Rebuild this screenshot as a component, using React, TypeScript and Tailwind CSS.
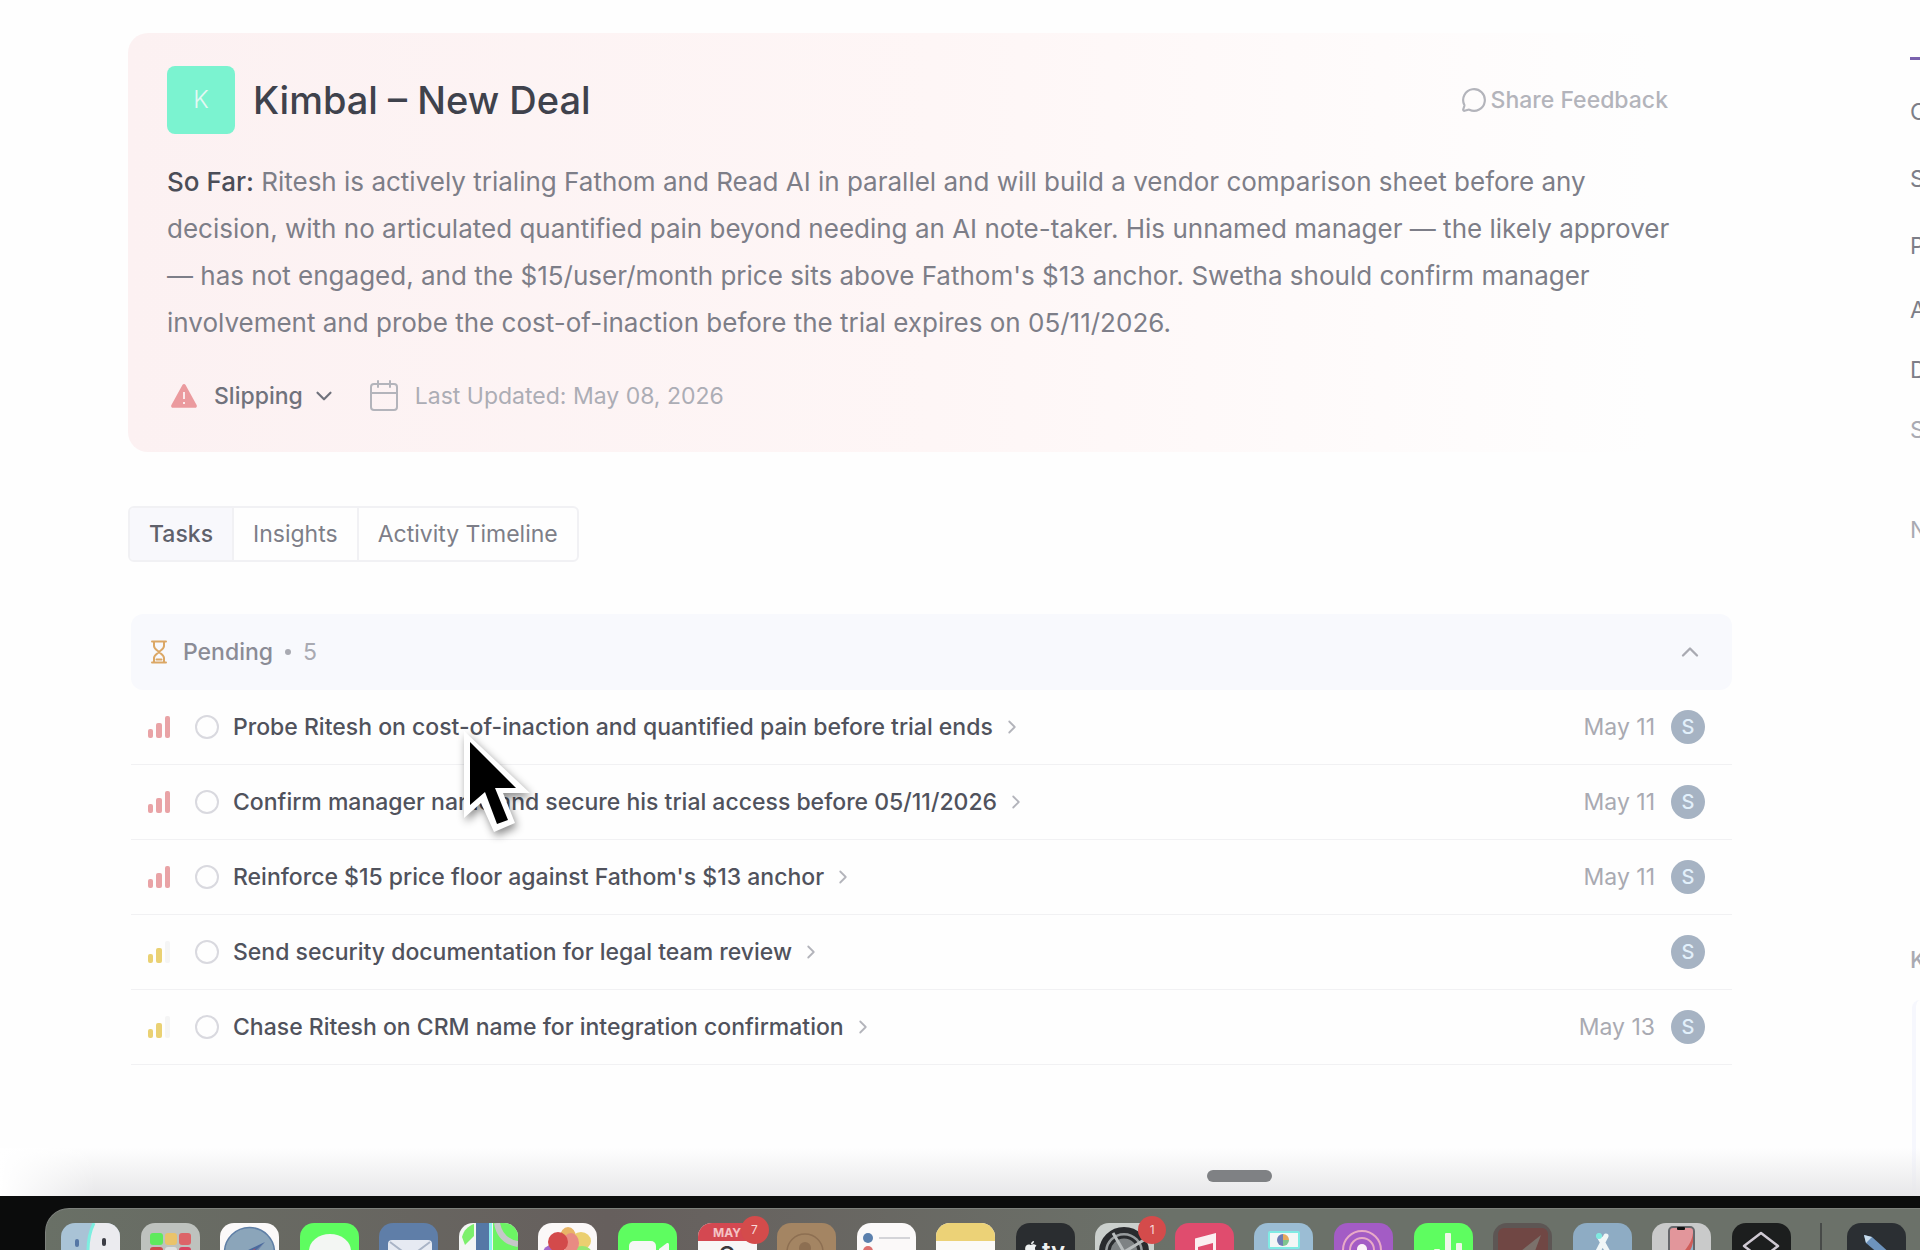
import { type ReactNode, useState } from "react";
import { ChevronDown, ChevronRight, ChevronUp, MessageCircle } from "lucide-react";
import { FaApple } from "react-icons/fa";

type Priority = "high" | "medium";

interface Task {
  id: number;
  title: string;
  priority: Priority;
  due?: string;
  owner: string;
}

const TASKS: Task[] = [
  {
    id: 1,
    title: "Probe Ritesh on cost-of-inaction and quantified pain before trial ends",
    priority: "high",
    due: "May 11",
    owner: "S",
  },
  {
    id: 2,
    title: "Confirm manager name and secure his trial access before 05/11/2026",
    priority: "high",
    due: "May 11",
    owner: "S",
  },
  {
    id: 3,
    title: "Reinforce $15 price floor against Fathom's $13 anchor",
    priority: "high",
    due: "May 11",
    owner: "S",
  },
  {
    id: 4,
    title: "Send security documentation for legal team review",
    priority: "medium",
    owner: "S",
  },
  {
    id: 5,
    title: "Chase Ritesh on CRM name for integration confirmation",
    priority: "medium",
    due: "May 13",
    owner: "S",
  },
];

const TABS = ["Tasks", "Insights", "Activity Timeline"];

function WarningIcon() {
  return (
    <svg width="28" height="26" viewBox="0 0 28 26" aria-hidden="true">
      <path
        d="M12.4 1.9a1.9 1.9 0 0 1 3.2 0l11 20.2a1.8 1.8 0 0 1-1.6 2.7H3a1.8 1.8 0 0 1-1.6-2.7z"
        fill="#eb9a9e"
      />
      <path d="M14 9v7M14 19v2" stroke="#fbeaeb" strokeWidth="2" />
    </svg>
  );
}

function CalendarIcon() {
  return (
    <svg
      width="30"
      height="32"
      viewBox="0 0 30 32"
      fill="none"
      stroke="#b3b4bb"
      strokeWidth="2"
      strokeLinecap="round"
      aria-hidden="true"
    >
      <rect x="2" y="4" width="26" height="26" rx="3" />
      <path d="M2 13h26M9 1v6M21 1v6" />
    </svg>
  );
}

function HourglassIcon() {
  return (
    <svg
      width="16"
      height="24"
      viewBox="0 0 16 24"
      fill="none"
      stroke="#dba765"
      strokeWidth="2"
      strokeLinecap="round"
      strokeLinejoin="round"
      aria-hidden="true"
    >
      <path d="M1 1.5h14M1 22.5h14M3 2v4c0 3 4 4.500 5 6 1-1.500 5-3 5-6V2M3 22v-4c0-3 4-4.500 5-6 1 1.500 5 3 5 6v4" />
      <path d="M5.500 19.500h5" />
    </svg>
  );
}

function PriorityIcon({ level }: { level: Priority }) {
  const color = level === "high" ? "#e9a3a6" : "#ead173";
  return (
    <svg width="24" height="24" viewBox="0 0 24 24" aria-hidden="true">
      <rect x="1" y="14" width="5" height="9" rx="2" fill={color} />
      <rect x="9" y="8" width="6" height="15" rx="2" fill={color} />
      <rect
        x="18"
        y="1"
        width="5"
        height="22"
        rx="2"
        fill={level === "high" ? color : "#f5f5f5"}
      />
    </svg>
  );
}

function TaskRow({ task }: { task: Task }) {
  return (
    <li className="flex h-[75px] items-center border-b border-[#f1f1f3] pl-4 pr-[27px]">
      <PriorityIcon level={task.priority} />
      <input
        id={`task-${task.id}`}
        type="checkbox"
        className="ml-6 size-6 appearance-none rounded-full border-2 border-[#d9d9df] checked:bg-[#d9d9df]"
      />
      <label
        htmlFor={`task-${task.id}`}
        className="ml-[14px] text-[23px] font-medium text-[#50525c]"
      >
        {task.title}
      </label>
      <ChevronRight size={22} strokeWidth={2} className="ml-2 text-[#b3b4bb]" />
      <div className="ml-auto flex items-center gap-4">
        {task.due && <span className="text-[23px] text-[#a9aab2]">{task.due}</span>}
        <span className="flex size-[34px] items-center justify-center rounded-full bg-[#a6b3c3] text-xl font-medium text-[#e2f0fb]">
          {task.owner}
        </span>
      </div>
    </li>
  );
}

function DealCard() {
  return (
    <section className="rounded-[20px] bg-linear-to-r from-[#fcf1f2] via-[#fef6f6] via-50% to-[#fefefe] to-95% pb-[42px] pl-[39px] pr-[52px] pt-[33px]">
      <header className="flex items-center">
        <span className="flex size-[68px] items-center justify-center rounded-lg bg-[#7bf3d0] text-2xl font-light text-[#e4f8f4]">
          K
        </span>
        <h1 className="ml-[18px] text-[38px] font-medium leading-[68px] text-[#3f424c]">
          Kimbal – New Deal
        </h1>
        <button className="ml-auto flex items-center gap-1 px-3 text-[23px] font-medium text-[#b3b4bb]">
          <MessageCircle size={26} strokeWidth={2} />
          Share Feedback
        </button>
      </header>

      <p className="mt-6 text-[26px] leading-[47px] text-[#7d7e88]">
        <strong className="font-medium text-[#4b4d57]">So Far:</strong> Ritesh is
        actively trialing Fathom and Read AI in parallel and will build a vendor
        comparison sheet before any decision, with no articulated quantified pain
        beyond needing an AI note-taker. His unnamed manager — the likely approver
        — has not engaged, and the $15/user/month price sits above Fathom's $13
        anchor. Swetha should confirm manager involvement and probe the
        cost-of-inaction before the trial expires on 05/11/2026.
      </p>

      <div className="mt-9 flex h-7 items-center text-[23px]">
        <button className="ml-[3px] flex items-center font-medium text-[#70727c]">
          <WarningIcon />
          <span className="ml-4">Slipping</span>
          <ChevronDown size={26} strokeWidth={2} className="ml-2" />
        </button>
        <div className="ml-8 flex items-center gap-4 text-[#acadb5]">
          <CalendarIcon />
          <span>Last Updated: May 08, 2026</span>
        </div>
      </div>
    </section>
  );
}

/* ---------- Dock ---------- */

interface DockApp {
  name: string;
  bg: string;
  art: ReactNode;
  badge?: string;
}

const DOCK_APPS: DockApp[] = [
  {
    name: "Finder",
    bg: "bg-[#a9c3d6]",
    art: (
      <>
        <path d="M33 0h26v59H27V28c0-12 2-22 6-28z" fill="#ebebef" />
        <path d="M33 0c-4 8-6 18-6 28" fill="none" stroke="#7deee0" strokeWidth="3" />
        <rect x="14" y="16" width="4" height="8" rx="2" fill="#5577a5" />
        <rect x="41" y="15" width="4" height="8" rx="2" fill="#3c3d45" />
      </>
    ),
  },
  {
    name: "Launchpad",
    bg: "bg-[#bec2be]",
    art: (
      <>
        <rect x="9" y="10" width="13" height="12" rx="3" fill="#5eea5c" />
        <rect x="24" y="10" width="12" height="12" rx="3" fill="#eac36a" />
        <rect x="38" y="10" width="12" height="12" rx="3" fill="#dc6468" />
        <rect x="9" y="24" width="13" height="12" rx="3" fill="#cc4b4d" />
        <rect x="24" y="24" width="12" height="12" rx="3" fill="#dfe0e0" />
        <rect x="38" y="24" width="12" height="12" rx="3" fill="#d84562" />
      </>
    ),
  },
  {
    name: "Safari",
    bg: "bg-[#fbf9f9]",
    art: (
      <>
        <circle cx="29.500" cy="29.500" r="25" fill="#8ba5ba" stroke="#5f7fa6" strokeWidth="1.500" />
        <path d="m45 19-13 12-6-3z" fill="#4a6a9e" />
        <path d="m45 19-13 13-7 10z" fill="#56649a" />
        <path d="m36 25-10 6-3 8z" fill="#cf4a5c" />
      </>
    ),
  },
  {
    name: "Messages",
    bg: "bg-[#5efd60]",
    art: <ellipse cx="30" cy="28" rx="21" ry="17" fill="#f3f6f3" />,
  },
  {
    name: "Mail",
    bg: "bg-[#5f7ea8]",
    art: (
      <>
        <rect x="9" y="17" width="44" height="30" rx="4" fill="#e6eaf2" />
        <path d="m11 19 20 15 20-15" fill="none" stroke="#a9b4c6" strokeWidth="2" />
      </>
    ),
  },
  {
    name: "Maps",
    bg: "bg-[#f3f5f4]",
    art: (
      <>
        <path d="M3 14C5 7 9 3 15 1v12L6 22z" fill="#7cf06c" />
        <path d="M17 0h13v59H17z" fill="#5578a6" />
        <path d="M30 0h3v59h-3z" fill="#8df2f0" />
        <path d="M34 0h25v59H47L34 30z" fill="#6cf464" />
        <path d="M38 0c2 12 9 19 21 21" fill="none" stroke="#c5c8c8" strokeWidth="6" />
      </>
    ),
  },
  {
    name: "Photos",
    bg: "bg-[#fbf8f8]",
    art: (
      <>
        <ellipse cx="30" cy="14" rx="8" ry="10" fill="#e8b467" />
        <ellipse cx="43" cy="18" rx="10" ry="9" fill="#ebcf70" />
        <ellipse cx="44" cy="31" rx="10" ry="8" fill="#97e673" />
        <ellipse cx="14" cy="30" rx="9" ry="8" fill="#a469cb" />
        <ellipse cx="33" cy="20" rx="8" ry="10" fill="#e88b83" />
        <ellipse cx="20" cy="19" rx="10" ry="10" fill="#d34a4b" />
      </>
    ),
  },
  {
    name: "FaceTime",
    bg: "bg-[#5efd60]",
    art: (
      <>
        <rect x="11" y="18" width="27" height="24" rx="5" fill="#f5f7f5" />
        <path d="m41 26 8-6c1 0 2 0 2 2v16l-10-6z" fill="#f5f7f5" />
      </>
    ),
  },
  {
    name: "Calendar",
    bg: "bg-[#f8f6f6]",
    badge: "7",
    art: (
      <>
        <rect width="59" height="18" fill="#d44851" />
        <text x="29" y="14" fontSize="12" fontWeight="700" textAnchor="middle" fill="#f4c3c5">
          MAY
        </text>
        <text x="29" y="45" fontSize="30" textAnchor="middle" fill="#3a3a3d">
          8
        </text>
      </>
    ),
  },
  {
    name: "Contacts",
    bg: "bg-[#a48563]",
    art: (
      <>
        <circle cx="28" cy="29" r="18" fill="none" stroke="#8d6f52" strokeWidth="1.500" />
        <circle cx="28" cy="25" r="6" fill="#8d6f52" />
      </>
    ),
  },
  {
    name: "Reminders",
    bg: "bg-[#fbf9f9]",
    art: (
      <>
        <circle cx="11" cy="15" r="5" fill="#5b80ad" />
        <circle cx="11" cy="28" r="5" fill="#dc7170" />
        <path d="M22 15h31M22 28h31" stroke="#d4d4d8" strokeWidth="2" />
      </>
    ),
  },
  {
    name: "Notes",
    bg: "bg-[#fbfaf7]",
    art: <rect width="59" height="18" fill="#ecd277" />,
  },
  {
    name: "TV",
    bg: "bg-[#2a2d30]",
    art: (
      <>
        <FaApple x="7" y="17" width="18" height="22" color="#eef1f1" />
        <text x="26" y="36" fontSize="24" fontWeight="600" fill="#eef1f1">
          tv
        </text>
      </>
    ),
  },
  {
    name: "Settings",
    bg: "bg-[#cbd0cd]",
    badge: "1",
    art: (
      <>
        <circle cx="29" cy="29" r="22" fill="#989c9e" stroke="#292b2e" strokeWidth="6" />
        <circle cx="29" cy="29" r="15" fill="#7e8284" stroke="#292b2e" strokeWidth="3" />
        <path d="M29 29 18 10M29 29l20-12M29 29H8" stroke="#b9bdbe" strokeWidth="3" />
      </>
    ),
  },
  {
    name: "Music",
    bg: "bg-[#e04c6e]",
    art: (
      <path
        d="M20 15.500 41 10v31a6 5 0 1 1-3-4V20l-15 4v20a6 5 0 1 1-3-4z"
        fill="#fbeef1"
      />
    ),
  },
  {
    name: "Keynote",
    bg: "bg-[#9bbdd4]",
    art: (
      <>
        <rect x="15" y="9" width="30" height="16" rx="1" fill="#f3f6f6" stroke="#80ebe4" strokeWidth="2" />
        <path d="M29 11a6 6 0 0 1 6 6h-6z" fill="#e6a95d" />
        <path d="M35 17a6 6 0 0 1-6 6v-6z" fill="#7fc58f" />
        <path d="M29 23a6 6 0 0 1 0-12z" fill="#6e7db4" />
        <path d="M28 28h4v31h-4z" fill="#6d8da6" />
      </>
    ),
  },
  {
    name: "Podcasts",
    bg: "bg-[#a35cc5]",
    art: (
      <>
        <circle cx="28" cy="27" r="19" fill="none" stroke="#e8aac7" strokeWidth="2" />
        <circle cx="28" cy="27" r="12" fill="none" stroke="#e8aac7" strokeWidth="2" />
        <circle cx="28" cy="26" r="5" fill="#fbf2f8" />
      </>
    ),
  },
  {
    name: "Numbers",
    bg: "bg-[#5efd60]",
    art: (
      <>
        <rect x="20" y="26" width="6" height="20" rx="1" fill="#eff6e8" />
        <rect x="31" y="10" width="6" height="34" rx="1" fill="#eff6e8" />
        <rect x="42" y="20" width="6" height="24" rx="1" fill="#eff6e8" />
      </>
    ),
  },
  {
    name: "Dictionary",
    bg: "bg-[#5d5654]",
    art: (
      <>
        <rect x="5" y="5" width="50" height="54" rx="6" fill="#704744" />
        <path d="m28 28 20-16-6 16z" fill="#7b716b" />
      </>
    ),
  },
  {
    name: "App Store",
    bg: "bg-[#8eacc4]",
    art: (
      <>
        <path d="m33 13-14 27M26 13l15 27" stroke="#f0f6f7" strokeWidth="5" strokeLinecap="round" />
        <circle cx="26" cy="13" r="3" fill="#7ee9e0" />
      </>
    ),
  },
  {
    name: "iPhone Mirroring",
    bg: "bg-[#c9caca]",
    art: (
      <>
        <rect x="17" y="4" width="25" height="60" rx="4" fill="#e2969b" stroke="#66686c" strokeWidth="2" />
        <path d="M41 10v30H29c-2-12 10-14 12-30z" fill="#cf5d59" />
        <path d="M41 19v26H31c0-12 8-14 10-26z" fill="#8fb2c9" />
        <rect x="25" y="4" width="8" height="3" rx="1" fill="#111" />
      </>
    ),
  },
  {
    name: "Shortcuts",
    bg: "bg-[#1c1e1e]",
    art: (
      <path
        d="m29 10 17 13-17 13-17-13z"
        fill="none"
        stroke="#cfc9d3"
        strokeWidth="2.500"
        strokeLinejoin="round"
      />
    ),
  },
];

function DockIcon({ app }: { app: DockApp }) {
  return (
    <button aria-label={app.name} className="relative size-[59px] shrink-0">
      <span className={`block size-full overflow-hidden rounded-[14px] ${app.bg}`}>
        <svg viewBox="0 0 59 59" className="size-full">
          {app.art}
        </svg>
      </span>
      {app.badge && (
        <span className="absolute -right-3 -top-[7px] flex size-7 items-center justify-center rounded-full bg-[#d44b4b] text-xs text-[#f7dada]">
          {app.badge}
        </span>
      )}
    </button>
  );
}

function Dock() {
  return (
    <footer className="h-[54px] overflow-hidden bg-[#0b0c0c] pl-[45px] pt-3">
      <nav
        aria-label="Dock"
        className="flex items-start rounded-tl-3xl border-l border-t border-[#7d817c] bg-linear-to-r from-[#697066] via-[#665f5d] via-30% to-[#6b7169] to-60% pl-[15px] pr-[14px] pt-[14px]"
      >
        <div className="flex flex-1 justify-between">
          {DOCK_APPS.map((app) => (
            <DockIcon key={app.name} app={app} />
          ))}
        </div>
        <span className="ml-[29px] h-14 w-[2px] bg-[#474a48]" />
        <button
          aria-label="Preview"
          className="ml-[25px] size-[59px] overflow-hidden rounded-[14px] bg-[#2b2f33]"
        >
          <svg viewBox="0 0 59 59" className="size-full">
            <path d="m17 12 8 2 20 18-6 5-20-17z" fill="#6d93bd" />
            <path d="m17 12 8 2-6 6z" fill="#c8dcec" />
          </svg>
        </button>
      </nav>
    </footer>
  );
}

function Cursor() {
  return (
    <svg
      width="76"
      height="112"
      viewBox="0 0 76 112"
      className="pointer-events-none absolute left-[460px] top-[728px] drop-shadow-[2px_4px_4px_rgba(0,0,0,0.45)]"
      aria-hidden="true"
    >
      <path d="M4 3v87l17-15 13 29 21-9-12-30h27z" fill="#fff" />
      <path d="M10 14v63l15-13 12 32 11-4-13-32h21z" fill="#000" />
    </svg>
  );
}

export default function App() {
  const [activeTab, setActiveTab] = useState("Tasks");
  const [open, setOpen] = useState(true);

  return (
    <div className="relative flex h-screen flex-col overflow-hidden bg-[#fefefe] font-['Inter',sans-serif]">
      <div className="relative flex flex-1">
        <main className="min-w-0 flex-1 pl-32 pr-[178px] pt-[33px]">
          <DealCard />

          <div
            role="tablist"
            className="mt-[54px] inline-flex h-14 divide-x-2 divide-[#f1f1f4] overflow-hidden rounded-md border-2 border-[#f1f1f4] text-[23px]"
          >
            {TABS.map((tab) => (
              <button
                key={tab}
                role="tab"
                aria-selected={tab === activeTab}
                onClick={() => setActiveTab(tab)}
                className={
                  tab === activeTab
                    ? "bg-[#f8f8fc] px-[19px] font-medium text-[#5f616b]"
                    : "px-[19px] text-[#7d7e88]"
                }
              >
                {tab}
              </button>
            ))}
          </div>

          <section className="ml-[3px] mt-[52px]">
            <button
              onClick={() => setOpen(!open)}
              aria-expanded={open}
              className="flex h-[76px] w-full items-center rounded-xl bg-[#f8f9fd] pl-5 pr-7 text-[23px] text-[#a9aab2]"
            >
              <HourglassIcon />
              <span className="ml-4 font-medium text-[#8b8c96]">Pending</span>
              <span className="ml-3 size-[6px] rounded-full bg-[#a9aab2]" />
              <span className="ml-3">5</span>
              <ChevronUp size={28} strokeWidth={2} className="ml-auto" />
            </button>
            {open && (
              <ul>
                {TASKS.map((task) => (
                  <TaskRow key={task.id} task={task} />
                ))}
              </ul>
            )}
          </section>
        </main>

        {/* details panel, mostly past the right edge of the window */}
        <aside className="flex w-[10px] shrink-0 flex-col overflow-hidden pt-[57px] text-[23px] leading-8 text-[#7d7e88]">
          <div className="h-[3px] shrink-0 bg-[#7a62ad]" />
          <span className="mt-9">C</span>
          <span className="mt-[35px]">S</span>
          <span className="mt-[35px]">P</span>
          <span className="mt-8">A</span>
          <span className="mt-7">D</span>
          <span className="mt-7 text-[#a9aab2]">S</span>
          <span className="mt-[68px] text-[#a9aab2]">N</span>
          <span className="mt-[398px] font-medium text-[#a9aab2]">K</span>
          <div className="ml-[2px] mt-6 w-4 flex-1 rounded-tl-lg border-l-4 border-[#f6f7fd]" />
        </aside>

        <div className="pointer-events-none absolute inset-x-0 bottom-0 h-12 bg-linear-to-b from-transparent to-[#e7e7e9]" />
        <div className="pointer-events-none absolute bottom-0 left-0 h-12 w-24 bg-linear-to-r from-white to-transparent" />
        <div className="absolute bottom-[14px] right-[648px] h-3 w-[65px] rounded-full bg-[#7f8184]" />
      </div>

      <Dock />
      <Cursor />
    </div>
  );
}
